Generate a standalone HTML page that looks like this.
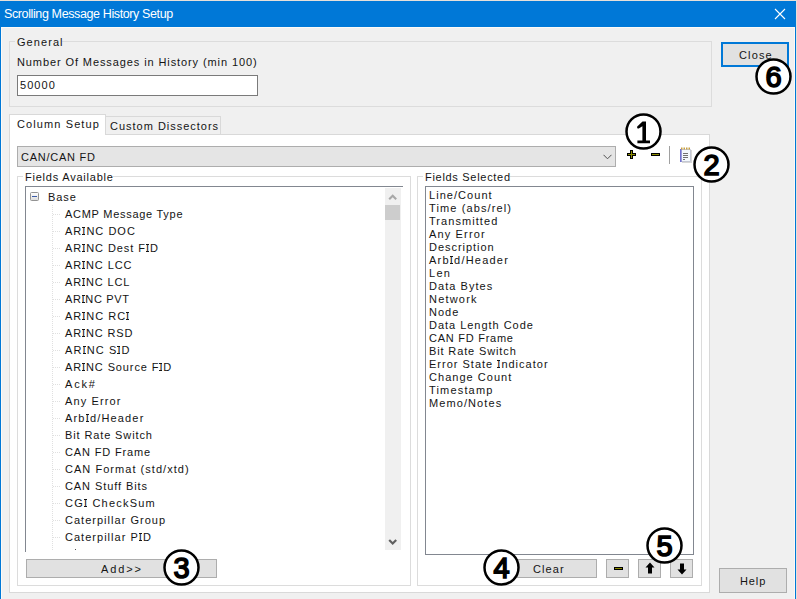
<!DOCTYPE html>
<html><head><meta charset="utf-8">
<style>
*{box-sizing:border-box;margin:0;padding:0}
html,body{width:797px;height:599px;overflow:hidden;background:#e6e0da}
body{position:relative;font-family:"Liberation Sans",sans-serif;font-size:11px;color:#000}
.a{position:absolute}
.t{position:absolute;white-space:pre;font-size:11px;line-height:13px;letter-spacing:0.9px;color:#141414}
.btn{position:absolute;background:#e1e1e1;border:1px solid #adadad}
.grp{position:absolute;border:1px solid #dcdcdc}
.I{background:linear-gradient(#141414,#141414) 0px 2px/3px 1px no-repeat,linear-gradient(#141414,#141414) 0px 9px/3px 1px no-repeat}
</style></head><body>

<div class="a" style="left:0;top:1px;width:796px;height:598px;background:#0078d7"></div>
<div class="a" style="left:1px;top:27px;width:794px;height:572px;background:#fcfaf7"></div>
<div class="a" style="left:2px;top:28px;width:792px;height:571px;background:#f0f0f0"></div>
<div class="t" style="left:4px;top:7px;font-size:12.5px;line-height:14px;letter-spacing:-0.38px;color:#fff">Scrolling Message History Setup</div>
<svg class="a" style="left:774px;top:8px" width="12" height="12"><path d="M1 1L11 11M11 1L1 11" stroke="#fff" stroke-width="1.1"/></svg>
<div class="grp" style="left:9px;top:41px;width:703px;height:66px"></div>
<div class="a" style="left:15px;top:38px;width:47px;height:8px;background:#f0f0f0"></div>
<div class="t" style="left:17px;top:36px;letter-spacing:1.067px">General</div>
<div class="t" style="left:17px;top:56px;letter-spacing:0.901px">Number Of Messages in History (min 100)</div>
<div class="a" style="left:17px;top:75px;width:241px;height:21px;border:1px solid #7a7a7a;background:#fff"></div>
<div class="t" style="left:20px;top:79px;letter-spacing:1.055px">50000</div>
<div class="btn" style="left:721px;top:42px;width:68px;height:25px;border:2px solid #0078d7"></div>
<div class="t" style="left:739px;top:49px;letter-spacing:1.125px">Close</div>
<div class="a" style="left:9px;top:134px;width:701px;height:459px;border:1px solid #d9d9d9;background:#fff"></div>
<div class="a" style="left:105px;top:116px;width:116px;height:19px;border:1px solid #d9d9d9;background:#f0f0f0"></div>
<div class="a" style="left:9px;top:114px;width:97px;height:21px;border:1px solid #d9d9d9;border-bottom:none;background:#fff"></div>
<div class="t" style="left:17px;top:118px;letter-spacing:1.106px">Column Setup</div>
<div class="t" style="left:110px;top:120px;letter-spacing:0.989px">Custom Dissectors</div>
<div class="a" style="left:17px;top:146px;width:599px;height:21px;border:1px solid #adadad;background:#e5e5e5"></div>
<div class="t" style="left:21px;top:151px;letter-spacing:0.734px">CAN/CAN FD</div>
<svg class="a" style="left:603px;top:154px" width="9" height="6"><path d="M0.5 0.8L4.5 4.8L8.5 0.8" stroke="#505050" fill="none" stroke-width="1"/></svg>
<svg class="a" style="left:627px;top:150px" width="9" height="9"><path d="M0 4.5H9M4.5 0V9" stroke="#000000" stroke-width="3"/><path d="M1 4.5H8M4.5 1V8" stroke="#8c8c00" stroke-width="1"/></svg>
<svg class="a" style="left:651px;top:153px" width="9" height="3"><rect width="9" height="3" fill="#000000"/><path d="M1 1.5H8" stroke="#8c8c00" stroke-width="1"/></svg>
<div class="a" style="left:669px;top:146px;width:1px;height:18px;background:#a0a0a0"></div>
<svg class="a" style="left:679px;top:146px" width="15" height="18">
<rect x="3" y="4" width="10" height="13" fill="#b0b0b0" opacity="0.5"/>
<path d="M2 3.5H11.5V15.5H2Z" fill="#f4f8fc" stroke="#c4c8d4" stroke-width="1"/>
<rect x="1" y="3" width="1.6" height="13" fill="#7070d0"/>
<path d="M2 2.5H12" stroke="#c8a040" stroke-width="2" stroke-dasharray="1.5 1"/>
<path d="M4 7.5H9M4 9.5H9M4 11.5H9M4 13.5H6" stroke="#707070" stroke-width="1"/>
</svg>
<div class="grp" style="left:17px;top:176px;width:394px;height:410px"></div>
<div class="a" style="left:23px;top:172px;width:90px;height:8px;background:#fff"></div>
<div class="t" style="left:25px;top:171px;letter-spacing:0.777px">Fields Available</div>
<div class="a" style="left:25px;top:186px;width:378px;height:366px;border-top:1px solid #828790;border-left:1px solid #828790;background:#fff;overflow:hidden"><svg class="a" style="left:4px;top:5px" width="9" height="9"><defs><linearGradient id="g" x1="0" y1="0" x2="0" y2="1"><stop offset="0" stop-color="#fff"/><stop offset="1" stop-color="#dcdcdc"/></linearGradient></defs><rect x="0.5" y="0.5" width="8" height="8" fill="url(#g)" stroke="#939393" rx="1"/><path d="M2 4.5H7" stroke="#3c5ca8"/></svg>
<div class="t" style="left:22px;top:4px">Base</div>
<div class="t" style="left:39px;top:21px;letter-spacing:0.721px">ACMP Message Type</div>
<div class="t" style="left:39px;top:38px;letter-spacing:1.019px">AR<span class="I">I</span>NC DOC</div>
<div class="t" style="left:39px;top:55px;letter-spacing:0.932px">AR<span class="I">I</span>NC Dest F<span class="I">I</span>D</div>
<div class="t" style="left:39px;top:72px;letter-spacing:0.889px">AR<span class="I">I</span>NC LCC</div>
<div class="t" style="left:39px;top:89px;letter-spacing:0.862px">AR<span class="I">I</span>NC LCL</div>
<div class="t" style="left:39px;top:106px;letter-spacing:0.661px">AR<span class="I">I</span>NC PVT</div>
<div class="t" style="left:39px;top:123px;letter-spacing:0.985px">AR<span class="I">I</span>NC RC<span class="I">I</span></div>
<div class="t" style="left:39px;top:140px;letter-spacing:0.86px">AR<span class="I">I</span>NC RSD</div>
<div class="t" style="left:39px;top:157px;letter-spacing:1.11px">AR<span class="I">I</span>NC S<span class="I">I</span>D</div>
<div class="t" style="left:39px;top:174px;letter-spacing:0.89px">AR<span class="I">I</span>NC Source F<span class="I">I</span>D</div>
<div class="t" style="left:39px;top:191px;letter-spacing:1.831px">Ack#</div>
<div class="t" style="left:39px;top:208px;letter-spacing:1.108px">Any Error</div>
<div class="t" style="left:39px;top:225px;letter-spacing:1.17px">Arb<span class="I">I</span>d/Header</div>
<div class="t" style="left:39px;top:242px;letter-spacing:0.88px">Bit Rate Switch</div>
<div class="t" style="left:39px;top:259px;letter-spacing:0.846px">CAN FD Frame</div>
<div class="t" style="left:39px;top:276px;letter-spacing:1.037px">CAN Format (std/xtd)</div>
<div class="t" style="left:39px;top:293px;letter-spacing:0.912px">CAN Stuff Bits</div>
<div class="t" style="left:39px;top:310px;letter-spacing:1.206px">CG<span class="I">I</span> CheckSum</div>
<div class="t" style="left:39px;top:327px;letter-spacing:1.016px">Caterpillar Group</div>
<div class="t" style="left:39px;top:344px;letter-spacing:1.02px">Caterpillar P<span class="I">I</span>D</div>
<div class="a" style="left:26px;top:18px;width:1px;height:345px;background:repeating-linear-gradient(#e0e0e0 0 1px,transparent 1px 2px)"></div>
<div class="a" style="left:27px;top:27px;width:7px;height:1px;background:repeating-linear-gradient(90deg,#e0e0e0 0 1px,transparent 1px 2px)"></div>
<div class="a" style="left:27px;top:44px;width:7px;height:1px;background:repeating-linear-gradient(90deg,#e0e0e0 0 1px,transparent 1px 2px)"></div>
<div class="a" style="left:27px;top:61px;width:7px;height:1px;background:repeating-linear-gradient(90deg,#e0e0e0 0 1px,transparent 1px 2px)"></div>
<div class="a" style="left:27px;top:78px;width:7px;height:1px;background:repeating-linear-gradient(90deg,#e0e0e0 0 1px,transparent 1px 2px)"></div>
<div class="a" style="left:27px;top:95px;width:7px;height:1px;background:repeating-linear-gradient(90deg,#e0e0e0 0 1px,transparent 1px 2px)"></div>
<div class="a" style="left:27px;top:112px;width:7px;height:1px;background:repeating-linear-gradient(90deg,#e0e0e0 0 1px,transparent 1px 2px)"></div>
<div class="a" style="left:27px;top:129px;width:7px;height:1px;background:repeating-linear-gradient(90deg,#e0e0e0 0 1px,transparent 1px 2px)"></div>
<div class="a" style="left:27px;top:146px;width:7px;height:1px;background:repeating-linear-gradient(90deg,#e0e0e0 0 1px,transparent 1px 2px)"></div>
<div class="a" style="left:27px;top:163px;width:7px;height:1px;background:repeating-linear-gradient(90deg,#e0e0e0 0 1px,transparent 1px 2px)"></div>
<div class="a" style="left:27px;top:180px;width:7px;height:1px;background:repeating-linear-gradient(90deg,#e0e0e0 0 1px,transparent 1px 2px)"></div>
<div class="a" style="left:27px;top:197px;width:7px;height:1px;background:repeating-linear-gradient(90deg,#e0e0e0 0 1px,transparent 1px 2px)"></div>
<div class="a" style="left:27px;top:214px;width:7px;height:1px;background:repeating-linear-gradient(90deg,#e0e0e0 0 1px,transparent 1px 2px)"></div>
<div class="a" style="left:27px;top:231px;width:7px;height:1px;background:repeating-linear-gradient(90deg,#e0e0e0 0 1px,transparent 1px 2px)"></div>
<div class="a" style="left:27px;top:248px;width:7px;height:1px;background:repeating-linear-gradient(90deg,#e0e0e0 0 1px,transparent 1px 2px)"></div>
<div class="a" style="left:27px;top:265px;width:7px;height:1px;background:repeating-linear-gradient(90deg,#e0e0e0 0 1px,transparent 1px 2px)"></div>
<div class="a" style="left:27px;top:282px;width:7px;height:1px;background:repeating-linear-gradient(90deg,#e0e0e0 0 1px,transparent 1px 2px)"></div>
<div class="a" style="left:27px;top:299px;width:7px;height:1px;background:repeating-linear-gradient(90deg,#e0e0e0 0 1px,transparent 1px 2px)"></div>
<div class="a" style="left:27px;top:316px;width:7px;height:1px;background:repeating-linear-gradient(90deg,#e0e0e0 0 1px,transparent 1px 2px)"></div>
<div class="a" style="left:27px;top:333px;width:7px;height:1px;background:repeating-linear-gradient(90deg,#e0e0e0 0 1px,transparent 1px 2px)"></div>
<div class="a" style="left:27px;top:350px;width:7px;height:1px;background:repeating-linear-gradient(90deg,#e0e0e0 0 1px,transparent 1px 2px)"></div>
<div class="a" style="left:27px;top:367px;width:7px;height:1px;background:repeating-linear-gradient(90deg,#e0e0e0 0 1px,transparent 1px 2px)"></div>
<div class="a" style="left:49px;top:362px;width:1px;height:1px;background:#505050"></div></div>
<div class="a" style="left:385px;top:188px;width:16px;height:362px;background:#f0f0f0"></div>
<div class="a" style="left:385px;top:205px;width:15px;height:15px;background:#cdcdcd"></div>
<svg class="a" style="left:388px;top:193px" width="10" height="8"><path d="M1.2 6.3L4.7 2.8L8.2 6.3" stroke="#a8a8a8" fill="none" stroke-width="2.1"/></svg>
<svg class="a" style="left:388px;top:538px" width="10" height="8"><path d="M1.2 2L4.7 5.5L8.2 2" stroke="#606060" fill="none" stroke-width="2.2"/></svg>
<div class="btn" style="left:26px;top:559px;width:191px;height:19px"></div>
<div class="t" style="left:101px;top:563px;letter-spacing:1.875px">Add&gt;&gt;</div>
<div class="grp" style="left:417px;top:176px;width:285px;height:410px"></div>
<div class="a" style="left:423px;top:172px;width:87px;height:8px;background:#fff"></div>
<div class="t" style="left:425px;top:171px;letter-spacing:0.704px">Fields Selected</div>
<div class="a" style="left:425px;top:186px;width:269px;height:369px;border:1px solid #828790;background:#fff"></div>
<div class="t" style="left:429px;top:189px;letter-spacing:1.045px">Line/Count</div>
<div class="t" style="left:429px;top:202px;letter-spacing:1.118px">Time (abs/rel)</div>
<div class="t" style="left:429px;top:215px;letter-spacing:1.06px">Transmitted</div>
<div class="t" style="left:429px;top:228px;letter-spacing:1.146px">Any Error</div>
<div class="t" style="left:429px;top:241px;letter-spacing:0.96px">Description</div>
<div class="t" style="left:429px;top:254px;letter-spacing:1.214px">Arb<span class="I">I</span>d/Header</div>
<div class="t" style="left:429px;top:267px;letter-spacing:1.3px">Len</div>
<div class="t" style="left:429px;top:280px;letter-spacing:1.044px">Data Bytes</div>
<div class="t" style="left:429px;top:293px;letter-spacing:1.197px">Network</div>
<div class="t" style="left:429px;top:306px;letter-spacing:0.996px">Node</div>
<div class="t" style="left:429px;top:319px;letter-spacing:0.97px">Data Length Code</div>
<div class="t" style="left:429px;top:332px;letter-spacing:0.742px">CAN FD Frame</div>
<div class="t" style="left:429px;top:345px;letter-spacing:0.869px">Bit Rate Switch</div>
<div class="t" style="left:429px;top:358px;letter-spacing:1.005px">Error State <span class="I">I</span>ndicator</div>
<div class="t" style="left:429px;top:371px;letter-spacing:1.033px">Change Count</div>
<div class="t" style="left:429px;top:384px;letter-spacing:1.17px">Timestamp</div>
<div class="t" style="left:429px;top:397px;letter-spacing:1.088px">Memo/Notes</div>
<div class="btn" style="left:517px;top:559px;width:80px;height:19px"></div>
<div class="t" style="left:533px;top:563px;letter-spacing:1.105px">Clear</div>
<div class="btn" style="left:606px;top:559px;width:23px;height:19px"></div>
<svg class="a" style="left:614px;top:567px" width="9" height="3"><rect width="9" height="3" fill="#000000"/><path d="M1 1.5H8" stroke="#8c8c00" stroke-width="1"/></svg>
<div class="btn" style="left:638px;top:559px;width:23px;height:19px"></div>
<svg class="a" style="left:645px;top:562px" width="10" height="12"><path d="M5 0.5L9.5 5.5H7V11.5H3V5.5H0.5Z" fill="#000"/></svg>
<div class="btn" style="left:670px;top:559px;width:23px;height:19px"></div>
<svg class="a" style="left:677px;top:563px" width="10" height="12"><path d="M5 11.5L9.5 6.5H7V0.5H3V6.5H0.5Z" fill="#000"/></svg>
<div class="btn" style="left:719px;top:568px;width:68px;height:25px"></div>
<div class="t" style="left:740px;top:575px;letter-spacing:0.897px">Help</div>
<svg class="a" style="left:625.0px;top:112.8px" width="37" height="37"><circle cx="18.5" cy="18.5" r="17.0" fill="#fff" stroke="#000" stroke-width="2.5"/><path d="M17.5 8.5 H21 V27.6 H25 V30.2 H12.4 V27.6 H17.4 V13.2 L13.8 15.4 Q12.2 16.1 12.1 14.6 Q12 13.3 13.3 12.6 Z" fill="#000"/></svg>
<svg class="a" style="left:693.1px;top:145.9px" width="37" height="37"><circle cx="18.5" cy="18.5" r="17.0" fill="#fff" stroke="#000" stroke-width="2.5"/><text transform="translate(18.5 29.0) scale(1 1.02)" text-anchor="middle" font-family="Liberation Sans" font-weight="normal" font-size="29" fill="#000" stroke="#000" stroke-width="1.6">2</text></svg>
<svg class="a" style="left:162.8px;top:548.8px" width="37" height="37"><circle cx="18.5" cy="18.5" r="17.0" fill="#fff" stroke="#000" stroke-width="2.5"/><text transform="translate(18.5 29.0) scale(1 1.02)" text-anchor="middle" font-family="Liberation Sans" font-weight="normal" font-size="29" fill="#000" stroke="#000" stroke-width="1.6">3</text></svg>
<svg class="a" style="left:482.8px;top:548.8px" width="37" height="37"><circle cx="18.5" cy="18.5" r="17.0" fill="#fff" stroke="#000" stroke-width="2.5"/><text transform="translate(18.5 29.0) scale(1 1.02)" text-anchor="middle" font-family="Liberation Sans" font-weight="normal" font-size="29" fill="#000" stroke="#000" stroke-width="1.6">4</text></svg>
<svg class="a" style="left:646.0px;top:526.7px" width="37" height="37"><circle cx="18.5" cy="18.5" r="17.0" fill="#fff" stroke="#000" stroke-width="2.5"/><text transform="translate(18.5 29.0) scale(1 1.02)" text-anchor="middle" font-family="Liberation Sans" font-weight="normal" font-size="29" fill="#000" stroke="#000" stroke-width="1.6">5</text></svg>
<svg class="a" style="left:755.2px;top:57.7px" width="37" height="37"><circle cx="18.5" cy="18.5" r="17.0" fill="#fff" stroke="#000" stroke-width="2.5"/><text transform="translate(18.5 29.0) scale(1 1.02)" text-anchor="middle" font-family="Liberation Sans" font-weight="normal" font-size="29" fill="#000" stroke="#000" stroke-width="1.6">6</text></svg>
</body></html>
